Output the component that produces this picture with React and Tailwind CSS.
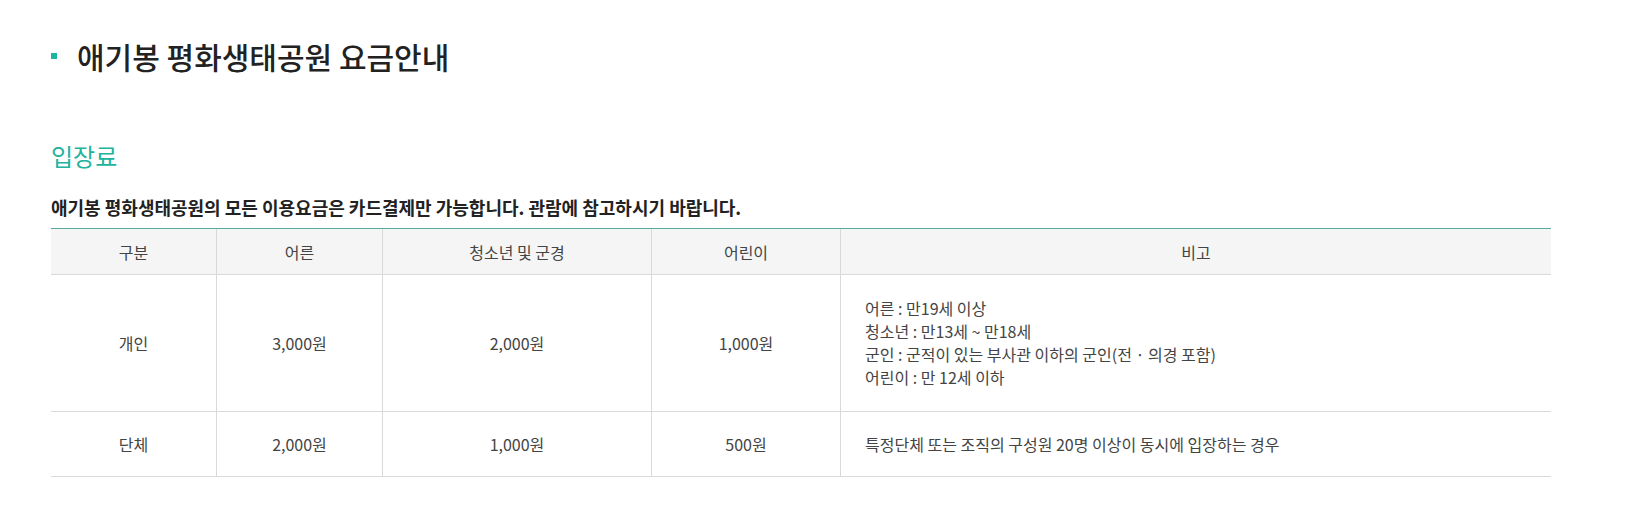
import React from "react";

const font = { fontFamily: '"Noto Sans CJK KR", "Noto Sans", sans-serif' };

const cols = ["w-[166px]", "w-[166px]", "w-[269px]", "w-[189px]", "w-[710px]"];

const heads = ["구분", "어른", "청소년 및 군경", "어린이", "비고"];

const rows = [
    {
        h: "h-[137px]",
        cells: ["개인", "3,000원", "2,000원", "1,000원"],
        note: [
            "어른 : 만19세 이상",
            "청소년 : 만13세 ~ 만18세",
            "군인 : 군적이 있는 부사관 이하의 군인(전 · 의경 포함)",
            "어린이 : 만 12세 이하",
        ],
    },
    {
        h: "h-[65px]",
        cells: ["단체", "2,000원", "1,000원", "500원"],
        note: ["특정단체 또는 조직의 구성원 20명 이상이 동시에 입장하는 경우"],
    },
];

function FeeTable() {
    return (
        <div className="w-[1500px] border-t border-[#5aa9a0] text-[16px] text-[#444]">
            <div className="flex h-[46px] bg-[#f5f5f5] border-b border-[#d9d9d9]">
                {heads.map((t, i) => (
                    <div
                        key={t}
                        className={`${cols[i]} flex items-center justify-center ${i < 4 ? "border-r border-[#d9d9d9]" : ""}`}
                    >
                        {t}
                    </div>
                ))}
            </div>
            {rows.map((r) => (
                <div key={r.cells[0]} className={`flex ${r.h} border-b border-[#d9d9d9]`}>
                    {r.cells.map((c, i) => (
                        <div
                            key={i}
                            className={`${cols[i]} flex items-center justify-center border-r border-[#d9d9d9]`}
                        >
                            {c}
                        </div>
                    ))}
                    <div className="w-[710px] flex flex-col justify-center pl-6 leading-[23px]">
                        {r.note.map((n) => (
                            <div key={n}>{n}</div>
                        ))}
                    </div>
                </div>
            ))}
        </div>
    );
}

export default function App() {
    return (
        <div className="min-h-[530px] bg-white pl-[51px] pt-[36px]" style={font}>
            <h1 className="flex items-center h-[40px] text-[30px] font-medium text-[#222]">
                <span className="w-[6px] h-[6px] bg-[#20b39d] mr-[20px]"></span>
                애기봉 평화생태공원 요금안내
            </h1>

            <h2 className="mt-[64px] h-[32px] leading-[32px] text-[24px] text-[#20b39d]">입장료</h2>

            <p className="mt-[23px] h-[24px] leading-[24px] text-[18px] font-bold text-[#222]">
                애기봉 평화생태공원의 모든 이용요금은 카드결제만 가능합니다. 관람에 참고하시기 바랍니다.
            </p>

            <div className="mt-[9px]">
                <FeeTable />
            </div>
        </div>
    );
}
